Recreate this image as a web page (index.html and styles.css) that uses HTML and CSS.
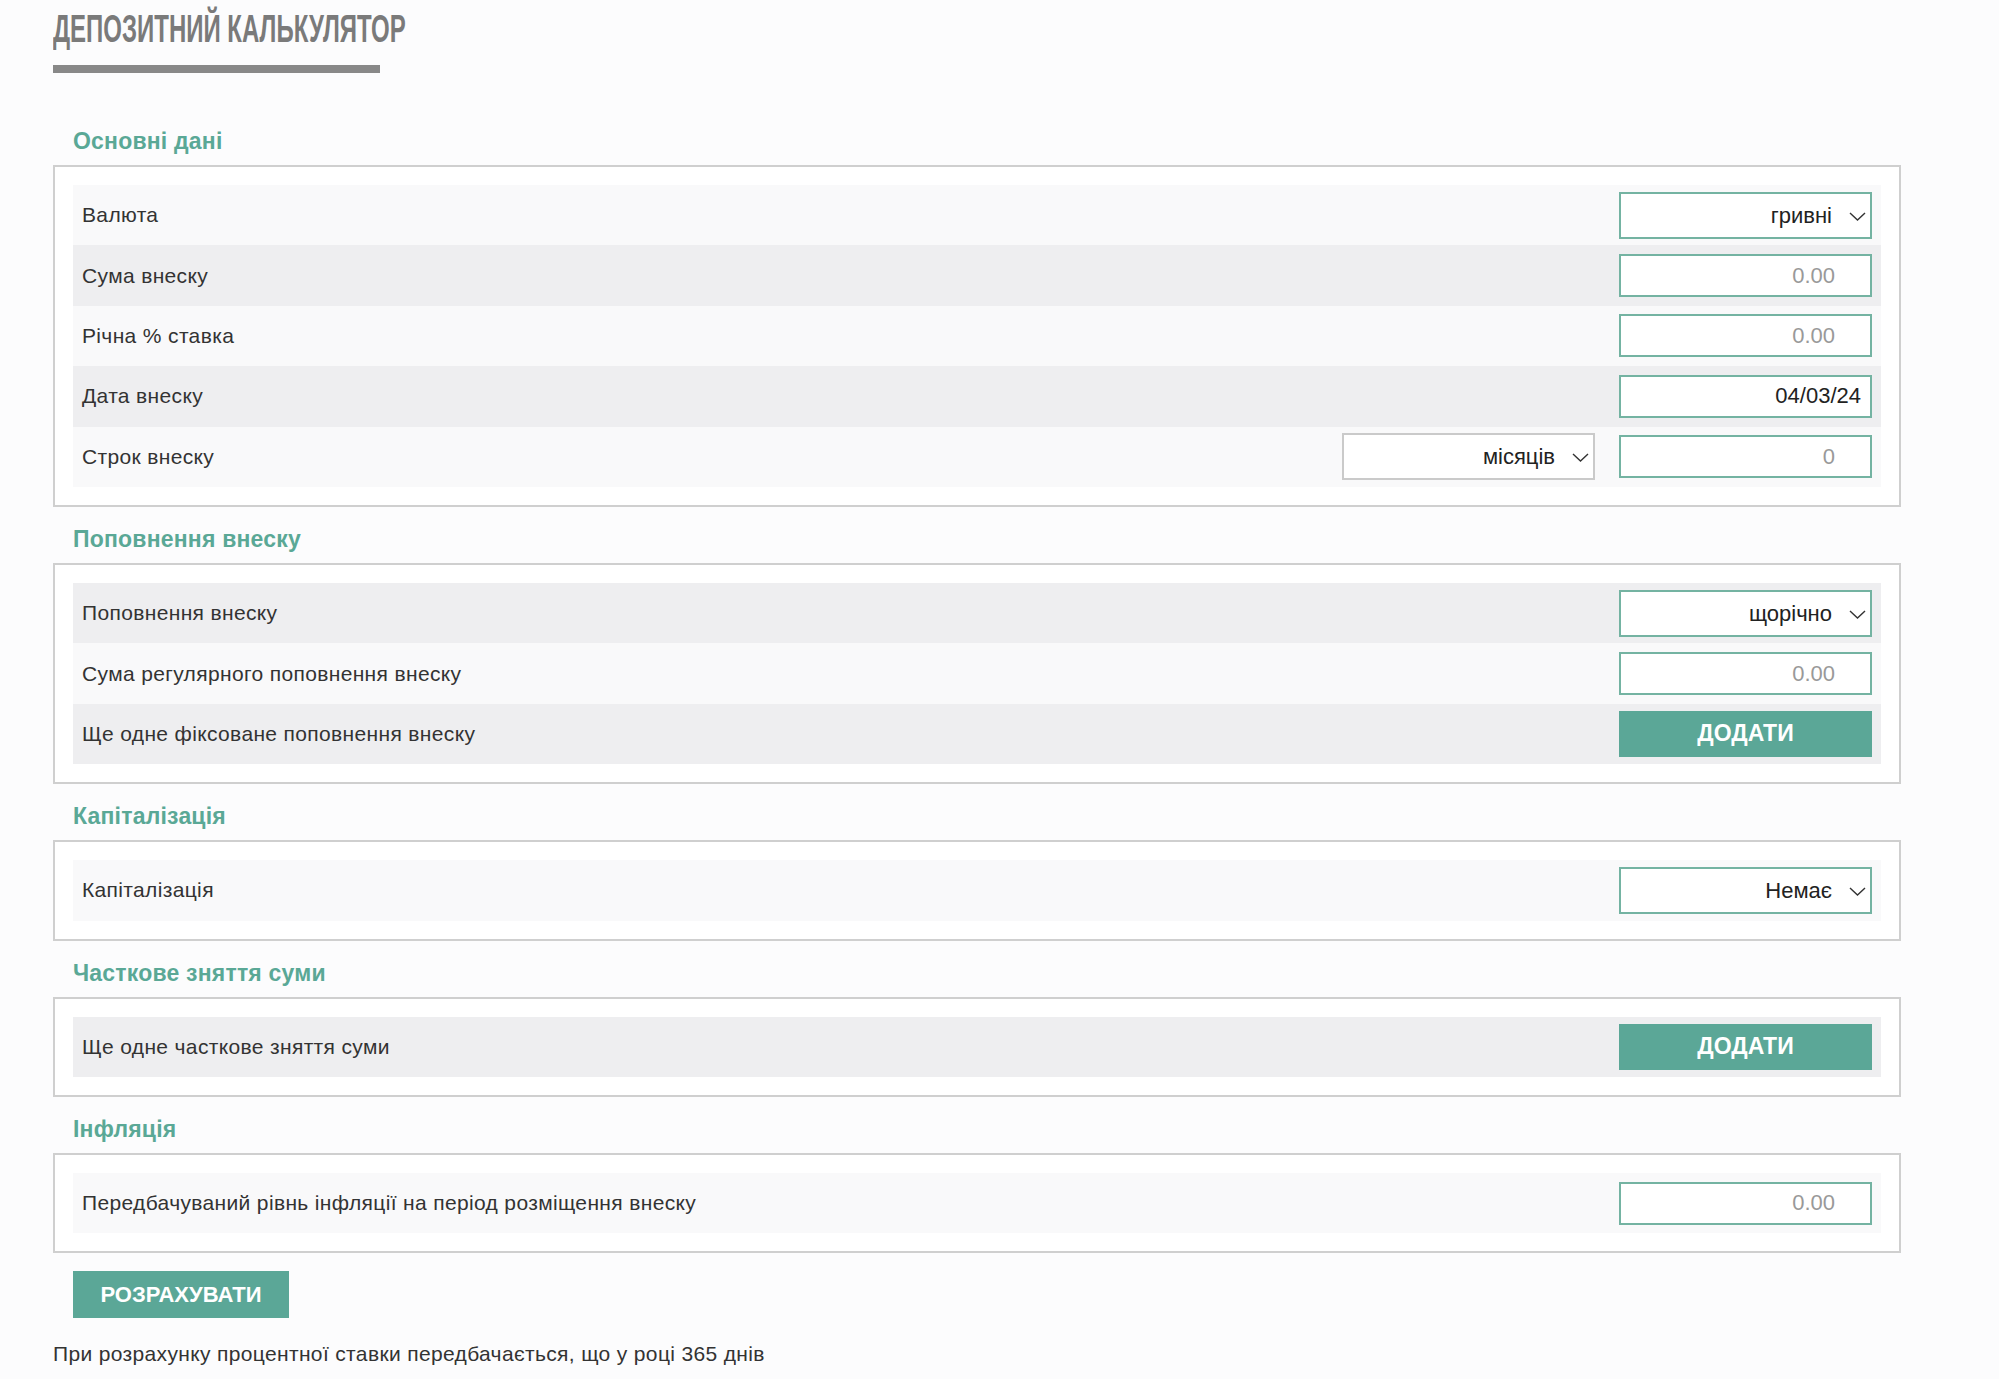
FILE: index.html
```html
<!DOCTYPE html>
<html>
<head>
  <title>Депозитний калькулятор</title>
  <meta name="viewport" content="width=device-width, initial-scale=1.0">
  <link rel="stylesheet" href="styles.css">
</head>
<body>

  <div class="page">
    <h1 class="title">ДЕПОЗИТНИЙ КАЛЬКУЛЯТОР</h1>
    <div class="title-bar"></div>

    <h2 class="section-title">Основні дані</h2>
    <div class="box">
      <div class="row light">
        <label>Валюта</label>
        <div class="controls">
          <div class="select-wrap">
            <select><option>гривні</option></select>
            <svg class="chevron" width="17" height="9" viewBox="0 0 17 9"><polyline points="1,1 8.5,8 16,1" /></svg>
          </div>
        </div>
      </div>
      <div class="row dark">
        <label>Сума внеску</label>
        <div class="controls"><input type="text" placeholder="0.00"></div>
      </div>
      <div class="row light">
        <label>Річна % ставка</label>
        <div class="controls"><input type="text" placeholder="0.00"></div>
      </div>
      <div class="row dark">
        <label>Дата внеску</label>
        <div class="controls"><input type="text" class="date" value="04/03/24"></div>
      </div>
      <div class="row light">
        <label>Строк внеску</label>
        <div class="controls">
          <div class="select-wrap gray">
            <select><option>місяців</option></select>
            <svg class="chevron" width="17" height="9" viewBox="0 0 17 9"><polyline points="1,1 8.5,8 16,1" /></svg>
          </div>
          <input type="text" placeholder="0">
        </div>
      </div>
    </div>

    <h2 class="section-title">Поповнення внеску</h2>
    <div class="box">
      <div class="row dark">
        <label>Поповнення внеску</label>
        <div class="controls">
          <div class="select-wrap">
            <select><option>щорічно</option></select>
            <svg class="chevron" width="17" height="9" viewBox="0 0 17 9"><polyline points="1,1 8.5,8 16,1" /></svg>
          </div>
        </div>
      </div>
      <div class="row light">
        <label>Сума регулярного поповнення внеску</label>
        <div class="controls"><input type="text" placeholder="0.00"></div>
      </div>
      <div class="row dark">
        <label>Ще одне фіксоване поповнення внеску</label>
        <div class="controls"><button class="btn add">Додати</button></div>
      </div>
    </div>

    <h2 class="section-title">Капіталізація</h2>
    <div class="box">
      <div class="row light">
        <label>Капіталізація</label>
        <div class="controls">
          <div class="select-wrap">
            <select><option>Немає</option></select>
            <svg class="chevron" width="17" height="9" viewBox="0 0 17 9"><polyline points="1,1 8.5,8 16,1" /></svg>
          </div>
        </div>
      </div>
    </div>

    <h2 class="section-title">Часткове зняття суми</h2>
    <div class="box">
      <div class="row dark">
        <label>Ще одне часткове зняття суми</label>
        <div class="controls"><button class="btn add">Додати</button></div>
      </div>
    </div>

    <h2 class="section-title">Інфляція</h2>
    <div class="box">
      <div class="row light">
        <label>Передбачуваний рівнь інфляції на період розміщення внеску</label>
        <div class="controls"><input type="text" placeholder="0.00"></div>
      </div>
    </div>

    <button class="btn calc">Розрахувати</button>

    <p class="note">При розрахунку процентної ставки передбачається, що у році 365 днів</p>
  </div>

</body>
</html>
```

FILE: styles.css
```css
* {
  margin: 0;
  padding: 0;
  box-sizing: border-box;
}

html, body {
  font-family: "Liberation Sans", Arial, sans-serif;
  background-color: #fcfcfd;
  color: #333;
}

.page {
  width: 1848px;
  margin-left: 53px;
}

.title {
  padding-top: 6px;
  font-family: "Liberation Sans Narrow", "Liberation Sans", sans-serif;
  font-size: 39px;
  line-height: 46px;
  font-weight: bold;
  color: #7a7a7a;
  white-space: nowrap;
  transform: scaleX(0.615);
  transform-origin: left center;
}

.title-bar {
  width: 327px;
  height: 8px;
  margin-top: 13px;
  background-color: #888;
}

.section-title {
  margin-top: 18px;
  margin-bottom: 10px;
  padding-left: 20px;
  font-size: 23px;
  line-height: 28px;
  letter-spacing: 0.2px;
  font-weight: bold;
  color: #5aa896;
}

.title-bar + .section-title {
  margin-top: 54px;
}

.box {
  border: 2px solid #cfcfcf;
  background-color: #fff;
  padding: 18px;
}

.row {
  display: flex;
  justify-content: space-between;
  align-items: center;
  height: 60.4px;
  padding: 0 9px;
}

.row.light {
  background-color: #f9f9fa;
}

.row.dark {
  background-color: #eeeef0;
}

.row label {
  font-size: 21px;
  letter-spacing: 0.35px;
  color: #333;
}

.controls {
  display: flex;
  align-items: center;
  gap: 24px;
}

.controls input {
  width: 253px;
  height: 43px;
  border: 2px solid #74b3a2;
  background-color: #fff;
  padding: 0 35px 0 10px;
  font-family: inherit;
  font-size: 22px;
  color: #222;
  text-align: right;
  outline: none;
}

.controls input::placeholder {
  color: #999;
}

.controls input.date {
  padding-right: 9px;
}

.select-wrap {
  position: relative;
  width: 253px;
  height: 47px;
}

.select-wrap select {
  width: 100%;
  height: 100%;
  border: 2px solid #74b3a2;
  border-radius: 0;
  background-color: #fff;
  padding: 0 38px 0 10px;
  font-family: inherit;
  font-size: 22px;
  color: #222;
  text-align-last: right;
  appearance: none;
  -webkit-appearance: none;
  outline: none;
}

.select-wrap.gray select {
  border-color: #cacaca;
}

.chevron {
  position: absolute;
  right: 6px;
  top: 20px;
  pointer-events: none;
}

.chevron polyline {
  fill: none;
  stroke: #333;
  stroke-width: 1.4;
}

.btn {
  border: none;
  background-color: #5ba797;
  color: #fff;
  font-family: inherit;
  font-weight: bold;
  font-size: 22px;
  text-transform: uppercase;
  cursor: pointer;
}

.btn.add {
  width: 253px;
  height: 46px;
  font-size: 23px;
}

.btn.calc {
  display: block;
  margin-top: 18px;
  margin-left: 20px;
  width: 216px;
  height: 47px;
}

.note {
  margin-top: 24px;
  font-size: 21px;
  line-height: 24px;
  letter-spacing: 0.35px;
  color: #333;
}
```
